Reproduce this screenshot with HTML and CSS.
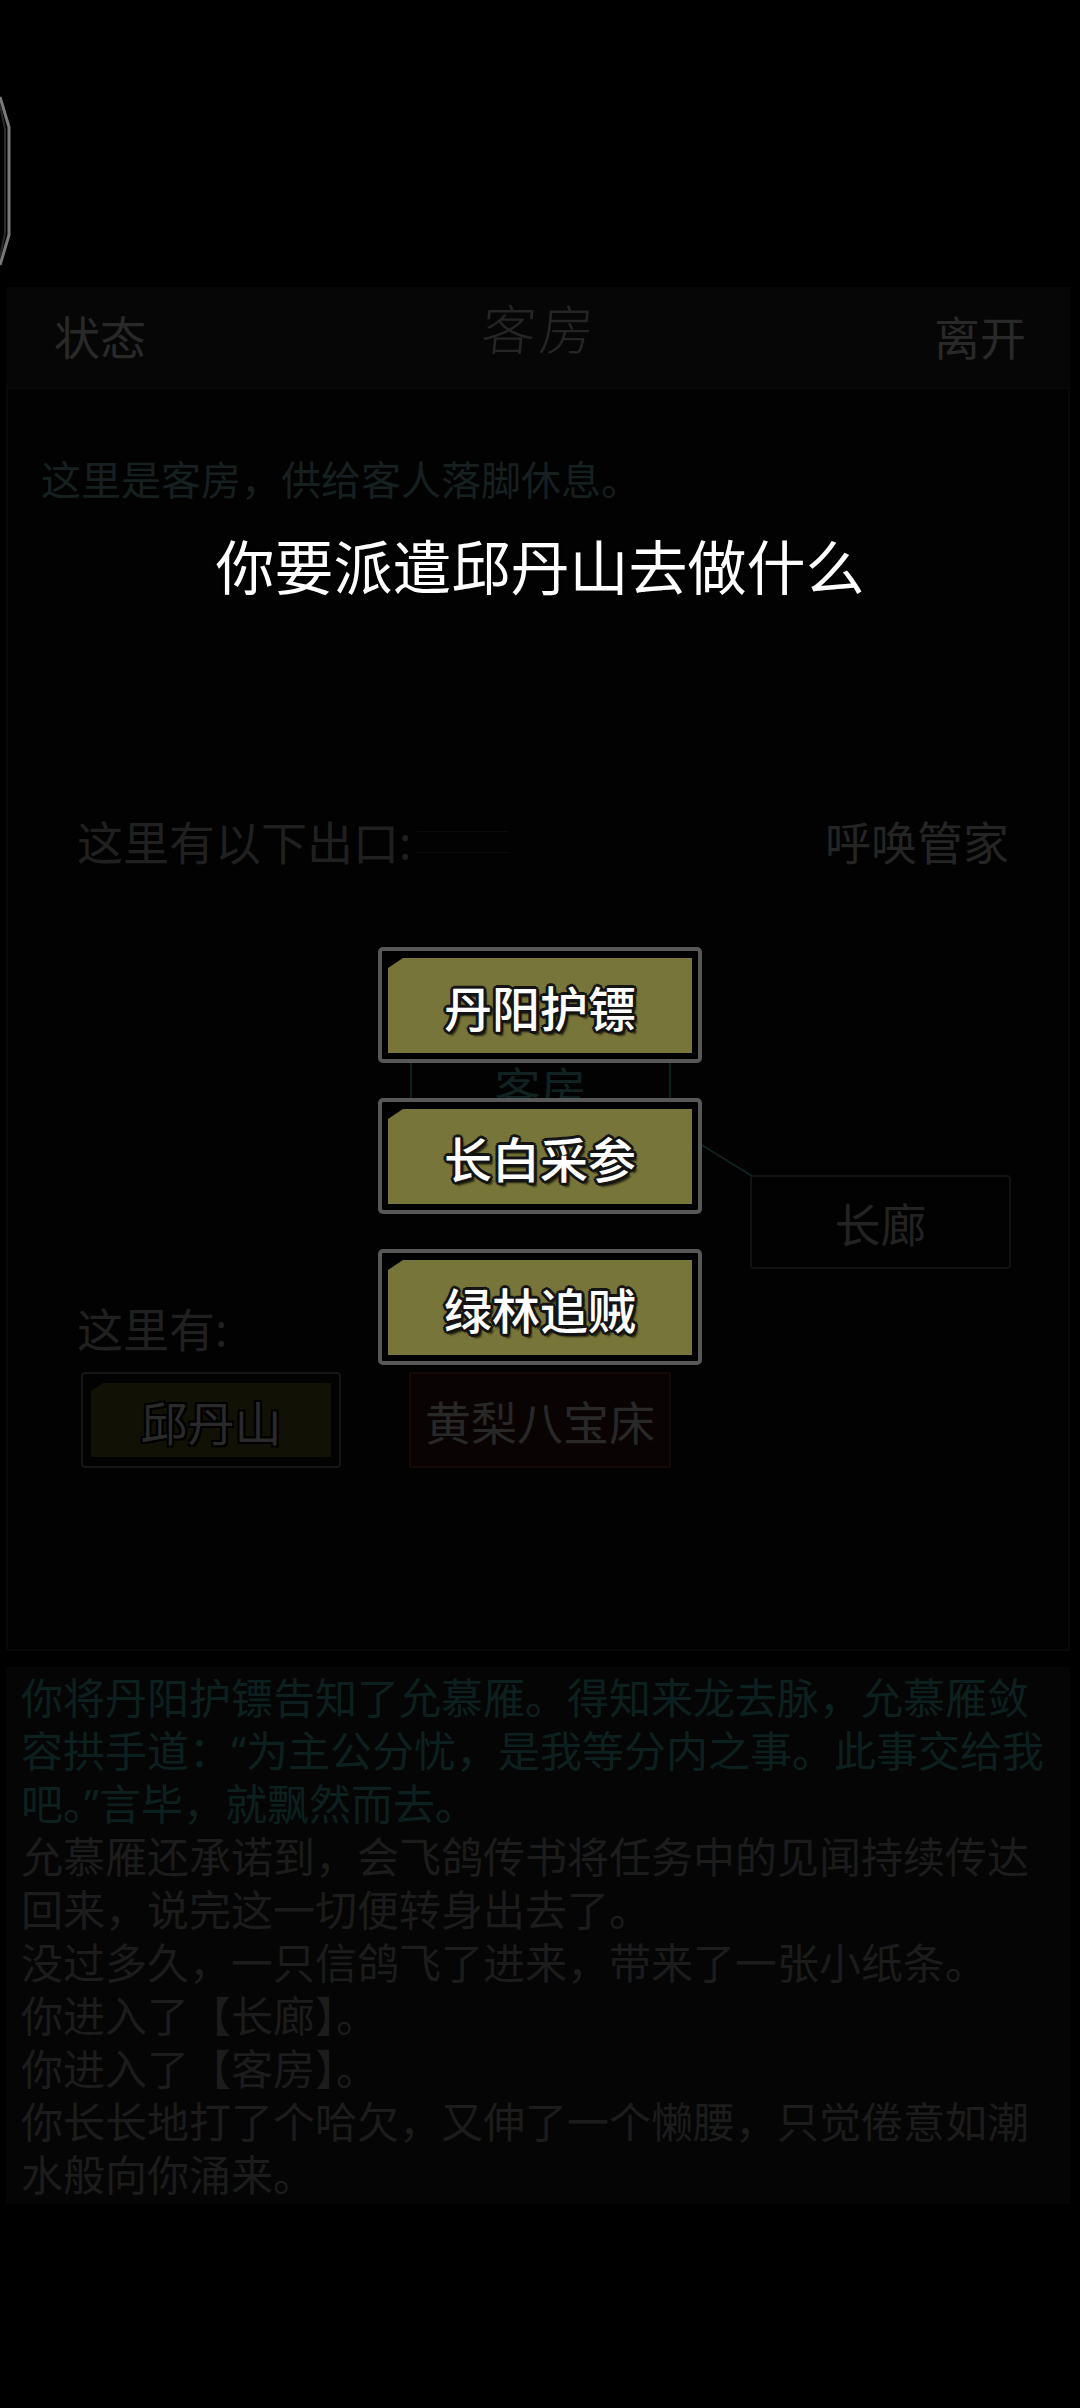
FILE: index.html
```html
<!DOCTYPE html>
<html lang="zh-CN">
<head>
<meta charset="utf-8">
<title>客房</title>
<link rel="stylesheet" href="styles.css">
</head>
<body>
<svg class="edge-handle" width="14" height="172" viewBox="0 0 14 172">
  <path d="M0 2 L9 32 L9 140 L0 170" fill="none" stroke="#7a7a7a" stroke-width="3"/>
  <path d="M0 10 L5 34 L5 138 L0 162" fill="none" stroke="#2a2a2a" stroke-width="2"/>
</svg>

<div class="top-space"></div>

<div class="app">
  <header class="topbar">
    <span class="tb-left">状态</span>
    <span class="tb-title">客房</span>
    <span class="tb-right">离开</span>
  </header>

  <section class="room">
    <p class="desc">这里是客房，供给客人落脚休息。</p>
    <div class="exits">
      <span class="exits-label">这里有以下出口:<span class="exits-rule"></span></span>
      <span class="butler">呼唤管家</span>
    </div>
    <div class="map">
      <svg class="map-lines" width="1060" height="427" viewBox="0 0 1060 427">
        <line x1="676" y1="262" x2="744" y2="304" stroke="#0d2422" stroke-width="2"/>
      </svg>
      <div class="node node-here">客房</div>
      <div class="node node-hall">长廊</div>
    </div>
    <div class="here-label">这里有:</div>
    <div class="items">
      <div class="npc"><span class="npc-fill">邱丹山</span></div>
      <div class="obj">黄梨八宝床</div>
    </div>
  </section>

  <section class="log">
    <p class="log-hi">你将丹阳护镖告知了允慕雁。得知来龙去脉，允慕雁敛容拱手道：“为主公分忧，是我等分内之事。此事交给我吧。”言毕，就飘然而去。</p>
    <p>允慕雁还承诺到，会飞鸽传书将任务中的见闻持续传达回来，说完这一切便转身出去了。</p>
    <p>没过多久，一只信鸽飞了进来，带来了一张小纸条。</p>
    <p>你进入了【长廊】。</p>
    <p>你进入了【客房】。</p>
    <p>你长长地打了个哈欠，又伸了一个懒腰，只觉倦意如潮水般向你涌来。</p>
  </section>
</div>

<div class="modal">
  <div class="modal-title">你要派遣邱丹山去做什么</div>
  <div class="choices">
    <button class="choice"><span class="choice-fill">丹阳护镖</span></button>
    <button class="choice"><span class="choice-fill">长白采参</span></button>
    <button class="choice"><span class="choice-fill">绿林追贼</span></button>
  </div>
</div>
</body>
</html>
```

FILE: styles.css
```css
* { box-sizing: border-box; }

html, body {
  margin: 0;
  padding: 0;
  background: #000;
}

body {
  position: relative;
  width: 1080px;
  height: 2408px;
  overflow: hidden;
  font-family: "Noto Sans", "Noto Sans CJK SC", sans-serif;
  color: #222;
}

p { margin: 0; }

.edge-handle {
  position: absolute;
  left: 0;
  top: 95px;
}

.top-space { height: 287px; }

.app {
  margin-left: 6px;
  width: 1064px;
}

/* ---------- top bar ---------- */
.topbar {
  height: 100px;
  background: #060606;
  display: grid;
  grid-template-columns: 1fr auto 1fr;
  align-items: center;
  padding: 0 44px 0 48px;
  font-size: 46px;
  line-height: 60px;
  color: #292929;
}
.tb-left { justify-self: start; }
.tb-right { justify-self: end; }
.tb-title {
  font-size: 54px;
  font-weight: 300;
  color: #252525;
  margin-top: -16px;
  letter-spacing: 4px;
  transform: skewX(-6deg);
}

/* ---------- room panel ---------- */
.room {
  height: 1264px;
  background: #020202;
  border: 2px solid #080808;
  padding-top: 63px;
}

.desc {
  padding-left: 33px;
  font-size: 40px;
  line-height: 56px;
  color: #172020;
}

.exits {
  margin-top: 304px;
  padding: 0 59px 0 69px;
  display: flex;
  justify-content: space-between;
  font-size: 46px;
  line-height: 60px;
  color: #202020;
}
.exits-label { display: flex; align-items: center; }
.exits-rule {
  display: inline-block;
  width: 92px;
  height: 22px;
  margin-left: 6px;
  border-top: 1px solid #0c0c0c;
  border-bottom: 1px solid #0c0c0c;
}
.butler { color: #252525; }

.map {
  position: relative;
  height: 427px;
}
.map-lines {
  position: absolute;
  left: 0;
  top: 0;
}
.node {
  position: absolute;
  display: flex;
  align-items: center;
  justify-content: center;
  border-radius: 4px;
  font-size: 46px;
}
.node-here {
  left: 402px;
  top: 165px;
  width: 261px;
  height: 97px;
  border: 2px solid #0b201e;
  color: #102221;
}
.node-hall {
  left: 742px;
  top: 303px;
  width: 261px;
  height: 94px;
  border: 2px solid #121212;
  color: #232323;
}

.here-label {
  padding-left: 69px;
  font-size: 46px;
  line-height: 60px;
  color: #202020;
}

.items {
  margin-top: 13px;
  padding-left: 73px;
  display: flex;
  gap: 68px;
}
.npc {
  width: 260px;
  height: 96px;
  border: 2px solid #161616;
  border-radius: 4px;
  padding: 9px 8px;
}
.npc-fill {
  display: flex;
  height: 100%;
  align-items: center;
  justify-content: center;
  background: #111105;
  clip-path: polygon(12px 0, 100% 0, 100% 100%, 0 100%, 0 8px);
  font-size: 47px;
  color: #2a2a2a;
  text-shadow: -2px -2px 0 #000, 2px -2px 0 #000, -2px 2px 0 #000, 2px 2px 0 #000;
}
.obj {
  width: 262px;
  height: 96px;
  background: #090403;
  border: 2px solid #140905;
  display: flex;
  align-items: center;
  justify-content: center;
  font-size: 46px;
  color: #282828;
}

/* ---------- log ---------- */
.log {
  margin-top: 16px;
  background: #050505;
  padding: 4px 9px 3px 15px;
  font-size: 42px;
  line-height: 53px;
  color: #1c1c1c;
}
.log-hi { color: #0c211f; }

/* ---------- modal ---------- */
.modal {
  position: absolute;
  left: 0;
  top: 0;
  width: 1080px;
  height: 2408px;
  display: flex;
  flex-direction: column;
  align-items: center;
  padding-top: 532px;
}
.modal-title {
  font-size: 59px;
  line-height: 70px;
  color: #fff;
  text-shadow: 0 0 3px rgba(0,0,0,.8);
}
.choices {
  margin-top: 345px;
  display: flex;
  flex-direction: column;
  gap: 35px;
  align-items: center;
}
.choice {
  margin: 0;
  width: 324px;
  height: 116px;
  border: 4px solid #585858;
  border-radius: 5px;
  padding: 7px 6px 6px 6px;
  background: #000;
  font: inherit;
  cursor: pointer;
}
.choice-fill {
  display: flex;
  height: 100%;
  align-items: center;
  justify-content: center;
  background: #777539;
  clip-path: polygon(15px 0, 100% 0, 100% 100%, 0 100%, 0 10px);
  font-family: "Noto Sans CJK SC", sans-serif;
  font-size: 48px;
  font-weight: 500;
  color: #fff;
  text-shadow:
    -2px -2px 0 #141414, 2px -2px 0 #141414, -2px 2px 0 #141414, 2px 2px 0 #141414,
    0 -3px 0 #141414, 0 3px 0 #141414, -3px 0 0 #141414, 3px 0 0 #141414,
    3px 4px 2px rgba(0,0,0,.7);
}
```
